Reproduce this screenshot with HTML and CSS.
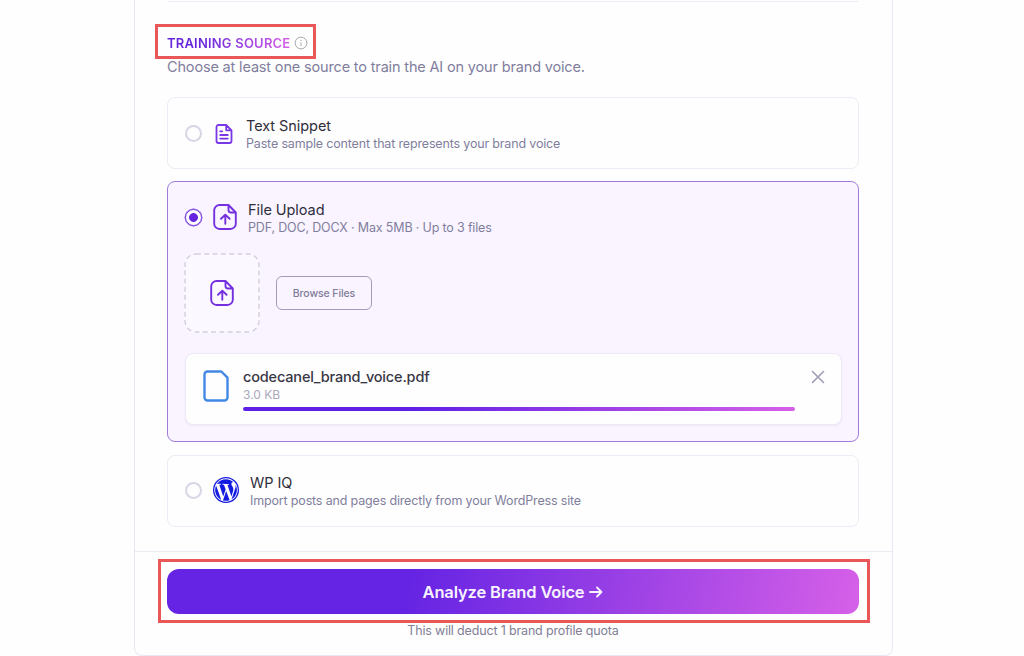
FILE: index.html
```html
<!DOCTYPE html>
<html lang="en">
<head>
<meta charset="utf-8">
<title>Brand Voice</title>
<link rel="stylesheet" href="styles.css">
</head>
<body>
<main class="panel">
  <div class="field-end"></div>
  <section class="training">
    <h2 class="section-title">
      <span class="section-label">TRAINING SOURCE</span>
      <svg class="info" viewBox="0 0 14 14" fill="none" stroke="currentColor"><circle cx="7" cy="7" r="5.9"/><path d="M7 6.3v3.8M7 3.8v1.2"/></svg>
      <span class="callout callout-title"></span>
    </h2>
    <p class="section-hint">Choose at least one source to train the AI on your brand voice.</p>

    <div class="option">
      <div class="option-head">
        <span class="radio"></span>
        <svg class="icon-doc" viewBox="0 0 18 20" fill="none" stroke="currentColor" stroke-width="1.8" stroke-linejoin="round" stroke-linecap="round"><path d="M11.2 1H3.5A2 2 0 0 0 1.500 3v14a2 2 0 0 0 2 2h11a2 2 0 0 0 2-2V6.300zM11.200 1v5.300h5.300M5.200 7.300h2M5.200 11h7.600M5.200 14.600h7.600"/></svg>
        <div class="option-text">
          <div class="option-name">Text Snippet</div>
          <div class="option-desc">Paste sample content that represents your brand voice</div>
        </div>
      </div>
    </div>

    <div class="option option-selected">
      <div class="option-head">
        <span class="radio radio-on"></span>
        <svg class="icon-upload" viewBox="0 0 24 26" fill="none" stroke="currentColor" stroke-width="1.9" stroke-linejoin="round" stroke-linecap="round"><path d="M15.500 1H6.500A5.300 5.300 0 0 0 1.200 6.300v13.400A5.300 5.300 0 0 0 6.500 25h11a5.300 5.300 0 0 0 5.300-5.300V8.500zM15.500 1v5a2.500 2.500 0 0 0 2.500 2.500h4.800M12.300 19.700v-8.600M8 14.800l4.300-4 4.300 4"/></svg>
        <div class="option-text">
          <div class="option-name">File Upload</div>
          <div class="option-desc">PDF, DOC, DOCX · Max 5MB · Up to 3 files</div>
        </div>
      </div>
      <div class="upload-row">
        <div class="dropzone">
          <svg class="dash" viewBox="0 0 76 80" fill="none"><rect x="1" y="1" width="74" height="78" rx="11"/></svg>
          <svg class="icon-upload" viewBox="0 0 24 26" fill="none" stroke="currentColor" stroke-width="1.9" stroke-linejoin="round" stroke-linecap="round"><path d="M15.500 1H6.500A5.300 5.300 0 0 0 1.200 6.300v13.400A5.300 5.300 0 0 0 6.500 25h11a5.300 5.300 0 0 0 5.300-5.300V8.500zM15.500 1v5a2.500 2.500 0 0 0 2.500 2.500h4.800M12.300 19.700v-8.600M8 14.800l4.300-4 4.300 4"/></svg>
        </div>
        <button class="browse">Browse Files</button>
      </div>
      <div class="file">
        <svg class="icon-file" viewBox="0 0 26 32" fill="none" stroke="currentColor" stroke-width="2.400" stroke-linejoin="round"><path d="M18.300 1.500H4.500A3 3 0 0 0 1.500 4.500v23a3 3 0 0 0 3 3h17a3 3 0 0 0 3-3V7.700z"/></svg>
        <div class="file-info">
          <div class="file-name">codecanel_brand_voice.pdf</div>
          <div class="file-size">3.0 KB</div>
          <div class="progress"></div>
        </div>
        <svg class="icon-close" viewBox="0 0 14 14" fill="none" stroke="currentColor" stroke-width="1.600" stroke-linecap="round"><path d="M1.500 1.500l11 11M12.500 1.500l-11 11"/></svg>
      </div>
    </div>

    <div class="option">
      <div class="option-head">
        <span class="radio"></span>
        <svg class="icon-wp" viewBox="0 0 24 24" fill="currentColor"><path d="M21.469 6.825c.84 1.537 1.318 3.3 1.318 5.175 0 3.979-2.156 7.456-5.363 9.325l3.295-9.527c.615-1.54.82-2.771.82-3.864 0-.405-.026-.78-.07-1.11m-7.981.105c.647-.03 1.232-.105 1.232-.105.582-.075.514-.93-.067-.899 0 0-1.755.135-2.88.135-1.064 0-2.85-.15-2.85-.15-.585-.03-.661.855-.075.885 0 0 .54.061 1.125.09l1.68 4.605-2.37 7.08L5.354 6.9c.649-.03 1.234-.1 1.234-.1.585-.075.516-.93-.065-.896 0 0-1.746.138-2.874.138-.2 0-.438-.008-.69-.015C4.911 3.15 8.235 1.215 12 1.215c2.809 0 5.365 1.072 7.286 2.833-.046-.003-.091-.009-.141-.009-1.06 0-1.812.923-1.812 1.914 0 .89.513 1.643 1.06 2.531.411.72.89 1.643.89 2.977 0 .915-.354 1.994-.821 3.479l-1.075 3.585-3.9-11.61.001.014zM12 22.784c-1.059 0-2.081-.153-3.048-.437l3.237-9.406 3.315 9.087c.024.053.05.101.078.149-1.12.393-2.325.609-3.582.609M1.211 12c0-1.564.336-3.05.935-4.39L7.29 21.709C3.694 19.96 1.212 16.271 1.211 12" transform="translate(12 12) scale(.93) translate(-12 -12)"/><circle cx="12" cy="12" r="11.400" fill="none" stroke="currentColor" stroke-width="1.200"/></svg>
        <div class="option-text">
          <div class="option-name">WP IQ</div>
          <div class="option-desc">Import posts and pages directly from your WordPress site</div>
        </div>
      </div>
    </div>
  </section>

  <footer class="footer">
    <span class="callout callout-action"></span>
    <button class="analyze"><span>Analyze Brand Voice</span>
      <svg class="arrow" viewBox="0 0 14 12" fill="none" stroke="currentColor" stroke-width="1.800" stroke-linecap="round" stroke-linejoin="round"><path d="M1 6h11.500M8 1.500L12.500 6 8 10.500"/></svg>
    </button>
    <p class="quota">This will deduct 1 brand profile quota</p>
  </footer>
</main>
</body>
</html>
```
FILE: styles.css
```css
* { box-sizing: border-box; }
body {
  margin: 0;
  height: 656px;
  overflow: hidden;
  background: #fefefe;
  font-family: Inter, "Liberation Sans", sans-serif;
  color: #2f2d3a;
}
h2, p { margin: 0; }
svg { display: block; flex: none; }
button { font-family: inherit; padding: 0; }

.panel {
  width: 759px;
  height: 656px;
  margin-left: 134px;
  border: 1px solid #e9e8f2;
  border-top: 0;
  border-radius: 0 0 8px 8px;
}
.field-end {
  height: 2px;
  margin: 0 33px 0 32px;
  border-bottom: 1px solid #edebf5;
  border-radius: 0 0 8px 8px;
}
.training { padding: 31px 33px 0 32px; height: 549px; }
.section-title {
  position: relative;
  display: flex;
  align-items: center;
  gap: 4px;
  height: 20px;
}
.section-label {
  font-size: 13px;
  font-weight: 600;
  letter-spacing: 0.2px;
  background: linear-gradient(90deg, #6425dc 25%, #d660e8);
  -webkit-background-clip: text;
  background-clip: text;
  color: transparent;
}
.info { width: 14px; height: 14px; color: #aaa8b0; }
.callout {
  position: absolute;
  border: 3px solid #e95759;
  pointer-events: none;
}
.callout-title { left: -12px; top: -9px; width: 161px; height: 35px; }
.section-hint {
  height: 44px;
  padding-top: 4px;
  font-size: 14.5px;
  letter-spacing: -0.16px;
  line-height: 20px;
  color: #817e9d;
}
.option {
  height: 72px;
  margin-bottom: 12px;
  padding: 17px 16px 0 17px;
  border: 1px solid #edebf5;
  border-radius: 8px;
}
.option-selected {
  height: 261px;
  margin-bottom: 13px;
  border-color: #a17bdc;
  background: #f9f4ff;
}
.option-selected + .option { padding-top: 16px; }
.option-head { display: flex; align-items: center; height: 37px; }
.radio {
  flex: none;
  width: 17px;
  height: 17px;
  border: 2px solid #d9d5e4;
  border-radius: 50%;
}
.radio-on {
  border: 1.5px solid #6e31dd;
  box-shadow: 0 0 0 0.4px #6e31dd;
  background: radial-gradient(circle, #6825e0 4px, #fff 4.8px);
}
.icon-doc { width: 18px; height: 20px; margin-left: 13px; color: #7a37e6; }
.icon-upload { width: 24px; height: 26px; color: #7430df; }
.option-head .icon-upload { margin: -1px 0 0 11px; }
.icon-wp { width: 26px; height: 26px; margin: -1px 0 0 11px; color: #141be0; }
.option-text { margin: 3px 0 0 13px; white-space: nowrap; }
.icon-upload + .option-text { margin-left: 11px; }
.icon-wp + .option-text { margin-left: 11px; }
.option-name { font-size: 14.5px; letter-spacing: -0.06px; line-height: 18px; color: #302e3b; }
.option-desc { font-size: 12.5px; letter-spacing: -0.165px; line-height: 18px; color: #817e9d; }

.upload-row { display: flex; align-items: center; gap: 16px; margin: 17px 0 0 -1px; }
.dropzone {
  position: relative;
  display: grid;
  place-items: center;
  width: 76px;
  height: 80px;
  border-radius: 12px;
  background: #fbf9ff;
}
.dash { position: absolute; inset: 0; stroke: #d3cede; stroke-width: 1.4; stroke-dasharray: 5 3.300; }
.browse {
  width: 96px;
  height: 34px;
  border: 1px solid #a49cba;
  border-radius: 6px;
  background: transparent;
  font-size: 10.5px;
  letter-spacing: -0.1px;
  font-weight: 500;
  color: #817c98;
}
.file {
  display: flex;
  height: 72px;
  margin-top: 20px;
  padding: 16px 16px 0 17px;
  border: 1px solid #eee9f7;
  border-radius: 8px;
  background: #fefefe;
  box-shadow: 0 1px 2px #5a358a12;
}
.icon-file { width: 26px; height: 32px; color: #4388e5; }
.file-info { width: 553px; margin-left: 14px; margin-top: -3px; }
.file-name { font-size: 14.5px; letter-spacing: -0.17px; font-weight: 500; line-height: 19px; color: #383644; }
.file-size { font-size: 12px; line-height: 17px; color: #aba8bb; }
.progress {
  height: 4px;
  margin-top: 4px;
  border-radius: 2px;
  background: linear-gradient(90deg, #5f1fe5 30%, #d660e8);
}
.icon-close { width: 14px; height: 14px; margin-left: 16px; color: #a09bb5; }

.footer {
  position: relative;
  height: 104px;
  padding: 17px 33px 0 32px;
  border-top: 1px solid #edebf2;
}
.callout-action { left: 23px; top: 7px; width: 712px; height: 64px; }
.analyze {
  display: flex;
  align-items: center;
  justify-content: center;
  gap: 5px;
  width: 100%;
  height: 45px;
  border: 0;
  border-radius: 12px;
  background: linear-gradient(100deg, #6524e3 35%, #d660e8);
  color: #f8f2ff;
  font-size: 16.5px;
  letter-spacing: -0.15px;
  font-weight: 600;
}
.arrow { width: 14px; height: 12px; }
.quota {
  margin-top: 8px;
  font-size: 12.5px;
  letter-spacing: -0.16px;
  line-height: 17px;
  text-align: center;
  color: #817e95;
}
```
